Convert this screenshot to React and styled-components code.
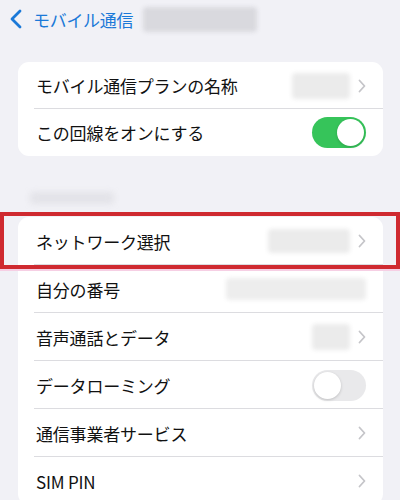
import React from "react";
import styled, { createGlobalStyle } from "styled-components";

const Global = createGlobalStyle`
  html, body { margin: 0; padding: 0; background: #f1f1f6; }
  body { font-family: "Noto Sans CJK JP", "Noto Sans", sans-serif; -webkit-font-smoothing: antialiased; }
`;

const Page = styled.div`
  width: 400px;
  height: 500px;
  overflow: hidden;
  background: #f1f1f6;
`;

const NavBar = styled.div`
  height: 38px;
  display: flex;
  align-items: center;
  padding-left: 9px;
  gap: 10px;
`;

const BackLabel = styled.span`
  font-size: 17px;
  color: #1b79d8;
  letter-spacing: -0.3px;
  line-height: 1;
`;

const Blur = styled.div`
  width: ${(p) => p.$w}px;
  height: ${(p) => p.$h}px;
  background: ${(p) => p.$c || "#e6e6e8"};
  border-radius: 4px;
  filter: blur(${(p) => p.$b || 2}px);
  flex: none;
`;

const Card = styled.div`
  position: relative;
  margin: ${(p) => p.$mt}px 17px 0 18px;
  background: #fff;
  border-radius: 11px;
`;

const Row = styled.div`
  height: ${(p) => p.$h || 48}px;
  display: flex;
  align-items: center;
  padding: 0 17px 0 18px;
  position: relative;
  &:not(:last-child)::after {
    content: "";
    position: absolute;
    left: 16px;
    right: 0;
    bottom: 0;
    height: 1px;
    background: #dcdce0;
  }
`;

const Label = styled.span`
  font-size: 17px;
  color: #111;
  flex: 1;
  letter-spacing: -0.2px;
  white-space: nowrap;
`;

const Trail = styled.div`
  display: flex;
  align-items: center;
  gap: 8px;
`;

const Toggle = styled.div`
  width: 54px;
  height: 31px;
  border-radius: 16px;
  background: ${(p) => (p.$on ? "#36c45a" : "#e9e9eb")};
  display: flex;
  align-items: center;
  justify-content: ${(p) => (p.$on ? "flex-end" : "flex-start")};
  padding: 2px;
  box-sizing: border-box;
`;

const Knob = styled.div`
  width: 27px;
  height: 27px;
  border-radius: 50%;
  background: #fff;
  box-shadow: 0 1px 3px rgba(0, 0, 0, 0.18);
`;

const SectionHeader = styled.div`
  height: 61px;
  display: flex;
  align-items: flex-end;
  padding: 0 0 13px 30px;
  box-sizing: border-box;
`;

const Highlight = styled.div`
  position: absolute;
  left: -18px;
  right: -17px;
  top: -5px;
  height: 57px;
  border: 4px solid #cf2a30;
  box-sizing: border-box;
  box-shadow: 0 2px 0 #f6cfe4;
  pointer-events: none;
`;

const Chevron = () => (
  <svg width="8" height="14" viewBox="0 0 8 14" fill="none">
    <path d="M1.5 1.5 L6.5 7 L1.5 12.5" stroke="#c5c5c9" strokeWidth="1.8" strokeLinecap="round" strokeLinejoin="round" />
  </svg>
);

const BackChevron = () => (
  <svg width="14" height="20" viewBox="0 0 14 20" fill="none">
    <path d="M11 2 L3 10 L11 18" stroke="#1b79d8" strokeWidth="2.8" strokeLinecap="round" strokeLinejoin="round" />
  </svg>
);

export default function App() {
  return (
    <Page>
      <Global />
      <NavBar>
        <BackChevron />
        <BackLabel>モバイル通信</BackLabel>
        <Blur $w={114} $h={25} $c="#d9d9de" />
      </NavBar>

      <Card $mt={24}>
        <Row $h={47}>
          <Label>モバイル通信プランの名称</Label>
          <Trail>
            <Blur $w={58} $h={26} $c="#ebebeb" />
            <Chevron />
          </Trail>
        </Row>
        <Row $h={47}>
          <Label>この回線をオンにする</Label>
          <Toggle $on>
            <Knob />
          </Toggle>
        </Row>
      </Card>

      <SectionHeader>
        <Blur $w={84} $h={12} $c="#e3e3e8" $b={3} />
      </SectionHeader>

      <Card $mt={0}>
        <Highlight />
        <Row>
          <Label>ネットワーク選択</Label>
          <Trail>
            <Blur $w={82} $h={24} $c="#ebebeb" />
            <Chevron />
          </Trail>
        </Row>
        <Row>
          <Label>自分の番号</Label>
          <Trail>
            <Blur $w={140} $h={22} $c="#ededed" />
          </Trail>
        </Row>
        <Row>
          <Label>音声通話とデータ</Label>
          <Trail>
            <Blur $w={38} $h={26} $c="#ebebeb" />
            <Chevron />
          </Trail>
        </Row>
        <Row>
          <Label>データローミング</Label>
          <Toggle>
            <Knob />
          </Toggle>
        </Row>
        <Row>
          <Label>通信事業者サービス</Label>
          <Chevron />
        </Row>
        <Row>
          <Label>SIM PIN</Label>
          <Chevron />
        </Row>
      </Card>
    </Page>
  );
}
